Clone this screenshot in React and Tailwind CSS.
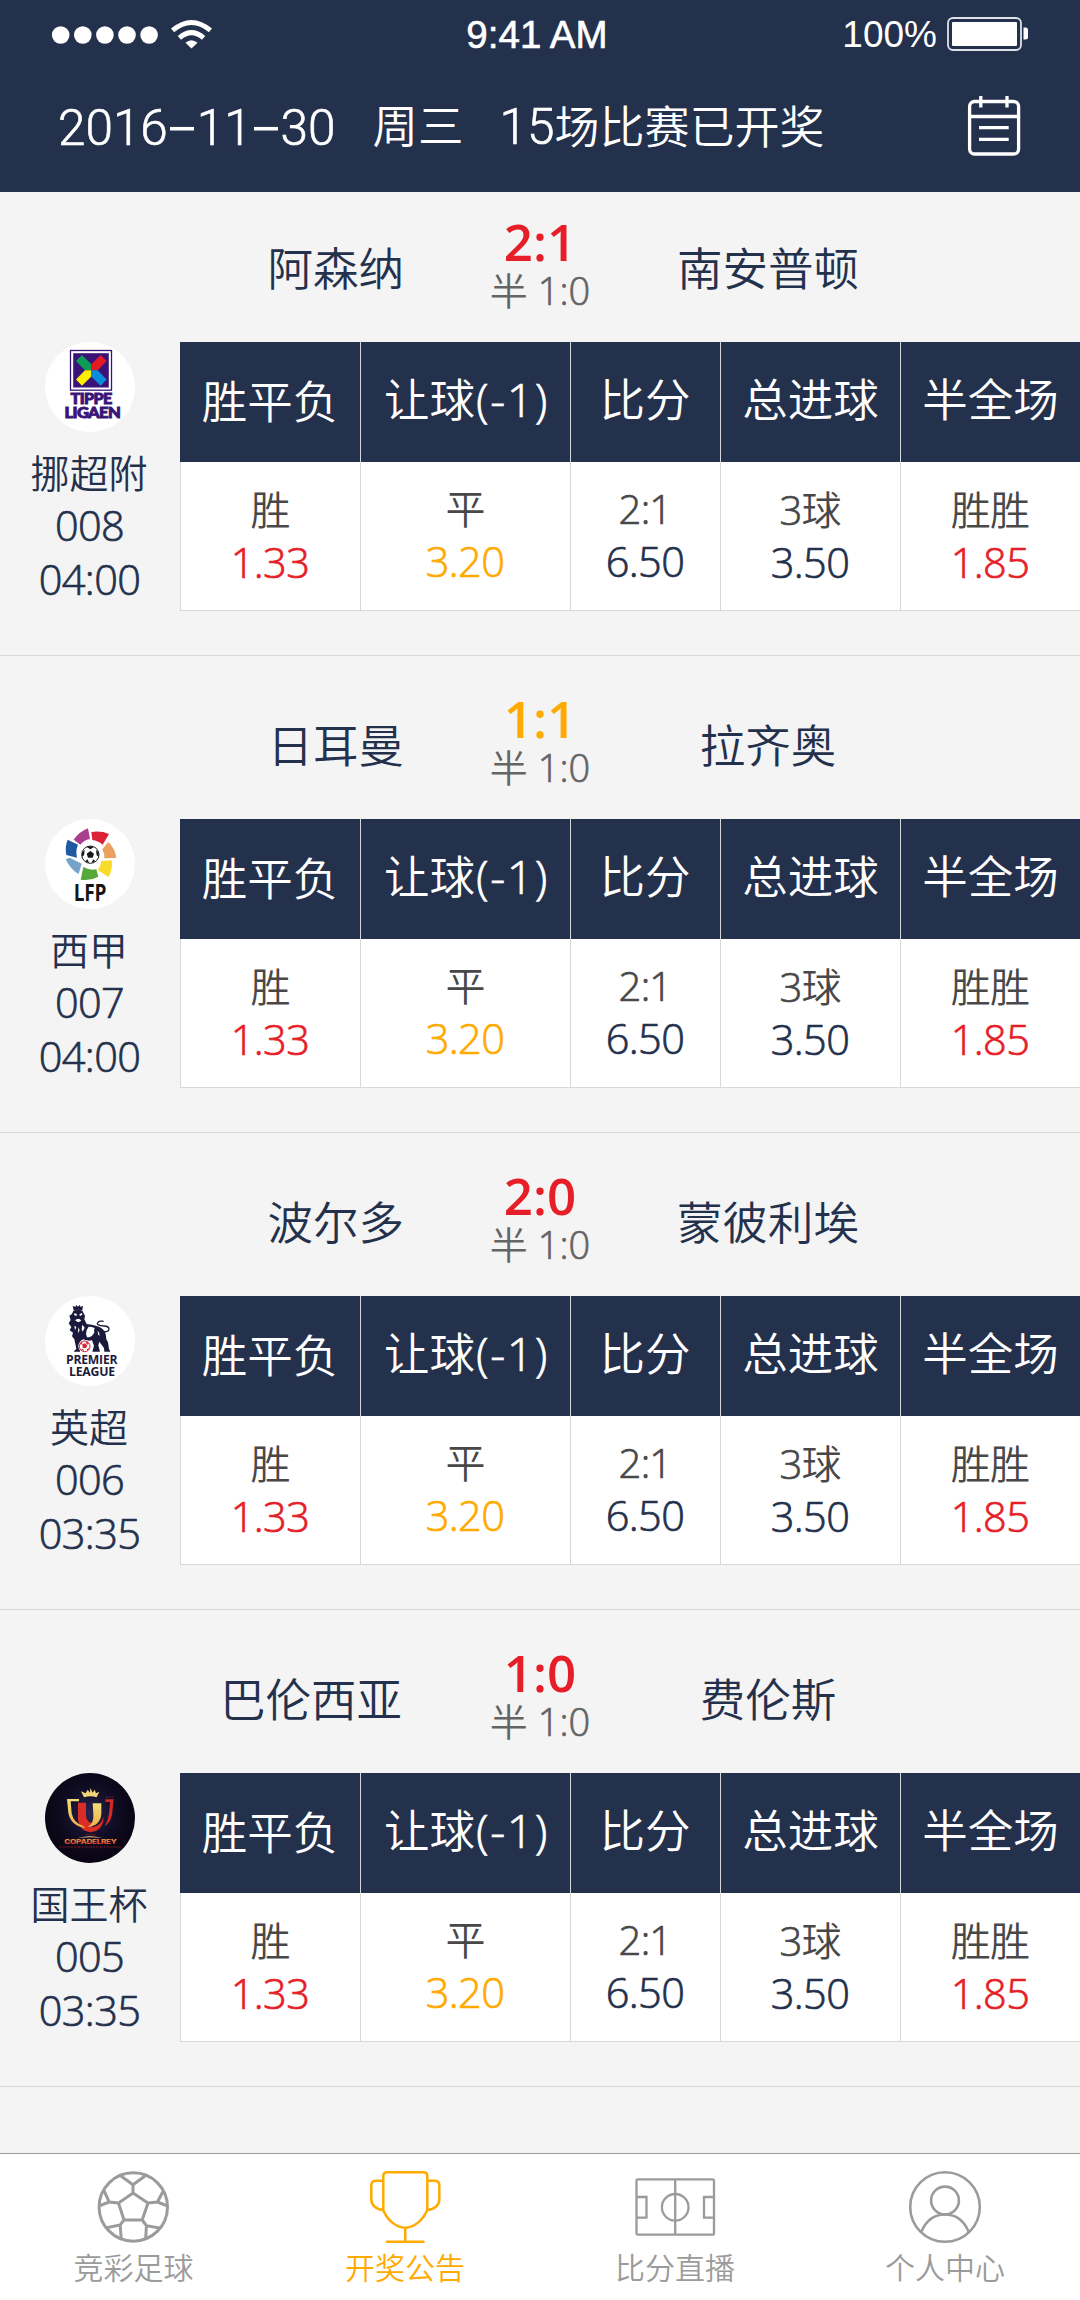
const RED = "text-[#e61e28]";
const ORANGE = "text-[#ffaa00]";
const NAVY = "text-[#24314d]";

function SignalIcon() {
  return (
    <svg width="162" height="32" viewBox="0 0 162 32" fill="#fff">
      {[9.7, 31.8, 53.9, 76, 98.1].map((x) => (
        <circle key={x} cx={x} cy="17" r="8.8" />
      ))}
      <g fill="none" stroke="#fff" strokeWidth="5">
        <path d="M121.6 12.4Q140.5-3.4 159.4 12.4" />
        <path d="M128.4 19.8Q140.5 9.400 152.600 19.8" />
      </g>
      <path d="M134.400 24.800Q140.500 19.800 146.600 24.800L140.500 30.500z" />
    </svg>
  );
}

function BatteryIcon() {
  return (
    <svg width="82" height="34" viewBox="0 0 82 34">
      <rect x="1" y="1" width="73" height="32" rx="5" fill="none" stroke="#dfe2e8" strokeWidth="1.8" />
      <rect x="5" y="5" width="65" height="24" rx="1" fill="#fff" />
      <path d="M76.500 10.500h2q2.500 0 2.500 2.500v7q0 2.500-2.500 2.500h-2z" fill="#fff" />
    </svg>
  );
}

function CalendarIcon() {
  return (
    <svg width="57" height="64" viewBox="0 0 57 64" fill="none" stroke="#fff" strokeWidth="3.300">
      <rect x="3.600" y="7.500" width="49" height="52.500" rx="5" />
      <path d="M14.800 2v11.500M41 2v11.500M3.600 22.500h49M13 33.700h29.700M13 45.300h29.700" />
    </svg>
  );
}

function BallIcon() {
  return (
    <svg width="73" height="74" viewBox="0 0 73 74" fill="none" stroke="currentColor" strokeWidth="3">
      <circle cx="36.300" cy="37" r="34.200" />
      <path d="M36 23 51 33 45.200 50H27L21.500 33zM36 23V14.700L23.600 5.700M36 14.700 48.300 5.700M51 33 60.400 32 65.900 21.700M60.400 32 70.700 36M21.500 33 12.200 32 7 20.700M12.200 32 1.900 36M45.200 50 49.400 55.700 62.500 58M49.400 55.700 48.700 68.500M27 50 23.200 55 9.400 57.700M23.200 55 24.200 69" />
    </svg>
  );
}

function TrophyIcon() {
  return (
    <svg width="72" height="74" viewBox="0 0 72 74" fill="none" stroke="currentColor" strokeWidth="2.500">
      <path d="M14.300 40V6q0-3.700 4-3.700h36q4 0 4 3.700v34C54 50 45 57.700 36.200 57.700S18 50 14.300 40z" />
      <path d="M14.300 10.700H7q-4.700 0-4.700 4.500V30c0 5 5.200 9.700 12 9.900M58.300 10.700h7.300q4.700 0 4.700 4.500V30c0 5-5.200 9.700-12 9.900M36.200 57.700v14" />
      <path d="M18 71.700h36.500" strokeLinecap="round" />
    </svg>
  );
}

function PitchIcon() {
  return (
    <svg width="81" height="60" viewBox="0 0 81 60" fill="none" stroke="currentColor" strokeWidth="2.300">
      <rect x="1.500" y="2.300" width="77.500" height="55.400" rx="1.500" />
      <circle cx="40.200" cy="30.300" r="13.300" />
      <path d="M40.200 2.300v55.400M1.500 20h10v20.700h-10M79 20H69v20.700h10" />
    </svg>
  );
}

function PersonIcon() {
  return (
    <svg width="74" height="74" viewBox="0 0 74 74" fill="none" stroke="currentColor" strokeWidth="2.600">
      <circle cx="37" cy="37" r="34.800" />
      <circle cx="37" cy="30.500" r="13.900" />
      <path d="M13.300 62C18 50.500 26.500 44.500 37 44.500S56 50.500 60.700 62" />
    </svg>
  );
}

function TippeligaenLogo() {
  return (
    <svg width="90" height="90" viewBox="0 0 90 90">
      <circle cx="45" cy="45" r="45" fill="#fff" />
      <rect x="25.500" y="8.500" width="41" height="39.700" fill="#fff" stroke="#3a1378" strokeWidth="1.300" />
      <rect x="28.200" y="11.200" width="35.600" height="34.300" fill="#3a1378" />
      <path d="M31 19 37 13 46.300 22.300V28.300H40z" fill="#0c9c56" />
      <path d="M61.600 19 55.700 13 46.300 22.300V28.300H52.700z" fill="#e51b24" />
      <path d="M31 37.500 37 43.700 46.300 34.500V28.300H40z" fill="#ffee00" />
      <path d="M61.600 37.500 55.700 43.700 46.300 34.500V28.300H52.700z" fill="#0a8edc" />
      <g fill="#3a1378" stroke="#3a1378" strokeWidth=".9" fontFamily="Lato, sans-serif" fontWeight="900" fontSize="15.300">
        <text x="25.600" y="62.200" textLength="41" lengthAdjust="spacingAndGlyphs">TIPPE</text>
        <text x="19.600" y="75.800" textLength="55.500" lengthAdjust="spacingAndGlyphs">LIGAEN</text>
      </g>
    </svg>
  );
}

function LfpLogo() {
  return (
    <svg width="90" height="90" viewBox="45 57 270 270">
      <circle cx="180" cy="192" r="135" fill="#fff" />
      <path d="M131 119Q148 95 174 85L180 117Q161 121 151 134z" fill="#a8408f" />
      <path d="M184 96Q214 92 237 102L218 134Q204 122 187 120z" fill="#dc2038" />
      <path d="M235 126Q256 146 259 174L223 175Q224 160 217 148z" fill="#eba15d" />
      <path d="M214 183 245 181Q249 207 236 231L203 211Q213 197 214 183z" fill="#f8dc2c" />
      <path d="M160 201Q180 212 199 208L205 230Q180 244 152 239z" fill="#56a838" />
      <path d="M107 178 119 173 155 191 146 222Q122 210 107 178z" fill="#77a3cb" />
      <path d="M113 119 144 134Q136 152 141 173L109 165Q104 140 113 119z" fill="#2059a2" />
      <circle cx="181" cy="164" r="26" fill="#fff" stroke="#222" strokeWidth="3" />
      <g fill="#161616">
        <path d="M181 153 192 161 188 173H174L170 161z" />
        <path d="M170 141Q181 136 192 141L181 148zM156 157 164 150 162 166 156 170zM206 157 198 150 200 166 206 170zM166 184 172 178 178 189zM196 184 190 178 184 189z" />
      </g>
      <text x="131" y="303" fill="#161616" fontFamily="'Open Sans', sans-serif" fontWeight="700" fontSize="70" textLength="98" lengthAdjust="spacingAndGlyphs">LFP</text>
    </svg>
  );
}

function PremierLeagueLogo() {
  return (
    <svg width="90" height="90" viewBox="45 48 270 270">
      <circle cx="180" cy="183" r="135" fill="#fff" />
      <g fill="#1c1a3c">
        <path d="M131 91 128 77 136 81 139 75 144 80 149 75 152 81 159 77 157 91Q144 87 131 91z" />
        <path d="M130 92Q144 87 157 92L165 107 163 118 170 132Q185 133 200 138 222 144 227 162L229 178 234 187 237 207 241 215H223L222 204 208 185 205 196 210 215H187L192 197 186 181Q172 184 160 178L152 182 150 215H131L139 206 133 178 126 169 129 158 119 151 124 141 116 130 122 120 118 107 126 102z" />
      </g>
      <path d="M221 155C242 157 242 139 222 138 207 137 198 134 204 127 209 121 215 124 221 124" fill="none" stroke="#1c1a3c" strokeWidth="4" />
      <path d="M134 99 141 103 139 108 132 105zM148 103 156 99 157 104 150 108zM141 117 149 117 154 122 145 127 135 121zM133 137 139 141 135 151zM157 134 164 143 158 155 155 148zM145 142 149 151 144 160zM176 140Q186 140 194 144 190 152 193 158 186 170 178 172L171 172Q166 162 170 150zM202 152Q210 158 208 168L204 163Q205 158 202 152z" fill="#fff" />
      <circle cx="164" cy="199" r="19" fill="#fff" />
      <circle cx="164" cy="199" r="16" fill="#fff" stroke="#d9213b" strokeWidth="3" />
      <path d="M157 193 166 190 172 197 167 205 158 203zM150 191 155 185 158 188 153 195zM168 184 176 189 174 195 168 189zM153 208 160 207 162 214zM170 208 178 204 174 212z" fill="#d9213b" />
      <g fill="#1c1a3c" fontFamily="'Open Sans', sans-serif" fontWeight="700" fontSize="39">
        <text x="108" y="252" textLength="154" lengthAdjust="spacingAndGlyphs">PREMIER</text>
        <text x="117" y="288" textLength="138" lengthAdjust="spacingAndGlyphs">LEAGUE</text>
      </g>
    </svg>
  );
}

function CopaDelReyLogo() {
  return (
    <svg width="90" height="90" viewBox="45 39 270 270">
      <defs>
        <radialGradient id="copaGlow" cx=".5" cy=".45" r=".5">
          <stop offset="0" stopColor="#2a2550" />
          <stop offset=".6" stopColor="#100c22" />
          <stop offset="1" stopColor="#0a0615" />
        </radialGradient>
        <linearGradient id="copaGold" x1="0" y1="0" x2="0" y2="1">
          <stop offset="0" stopColor="#f3dc7c" />
          <stop offset="1" stopColor="#f0b045" />
        </linearGradient>
        <linearGradient id="copaText" x1="0" y1="0" x2="0" y2="1">
          <stop offset="0" stopColor="#f6b04a" />
          <stop offset="1" stopColor="#e2322a" />
        </linearGradient>
      </defs>
      <circle cx="180" cy="174" r="135" fill="url(#copaGlow)" />
      <path d="M162 112 153 94 167 100 173 89 180 98 181 84 188 98 194 89 198 100 208 95 200 112Q181 106 162 112z" fill="#f4d775" />
      <path d="M144 128H168V166Q168 188 190 190L186 202Q215 196 220 170V184Q212 215 182 217 148 213 144 180z" fill="#d92d26" />
      <path d="M226 118H251L246 166Q241 188 224 199 235 180 237 160L240 126H226z" fill="#cf2a26" />
      <path d="M111 117H147V124H122L125 160Q131 190 160 198L166 204Q121 196 115 158z" fill="url(#copaGold)" />
      <path d="M188 130H214V162Q211 198 172 201 193 190 190 160z" fill="url(#copaGold)" />
      <path d="M143 234Q180 223 217 234 180 229 143 234z" fill="#f2c98d" />
      <text x="103" y="251" fill="url(#copaText)" fontFamily="Inter, sans-serif" fontWeight="800" fontSize="18" textLength="157" lengthAdjust="spacingAndGlyphs">COPADELREY</text>
      <path d="M88 261H273" stroke="#a32024" strokeWidth="3" strokeDasharray="5 2 3 2 7 3" opacity=".75" />
      <path d="M168 224H196M229 111H250" stroke="#a32024" strokeWidth="3" strokeDasharray="5 3" opacity=".8" />
    </svg>
  );
}

const MATCHES = [
  { home: "阿森纳", away: "南安普顿", score: "2:1", color: RED, Logo: TippeligaenLogo, league: "挪超附", no: "008", time: "04:00" },
  { home: "日耳曼", away: "拉齐奥", score: "1:1", color: ORANGE, Logo: LfpLogo, league: "西甲", no: "007", time: "04:00" },
  { home: "波尔多", away: "蒙彼利埃", score: "2:0", color: RED, Logo: PremierLeagueLogo, league: "英超", no: "006", time: "03:35" },
  { home: "巴伦西亚", away: "费伦斯", score: "1:0", color: RED, Logo: CopaDelReyLogo, league: "国王杯", no: "005", time: "03:35" },
];

const COLUMNS = [
  { title: "胜平负", unit: "胜", odds: "1.33", color: RED, nudge: "pb-[2px]", bodyNudge: "pt-[22px]" },
  { title: "让球", handicap: "(-1)", unit: "平", odds: "3.20", color: ORANGE, nudge: "pb-[6px]", bodyNudge: "pt-[21px]" },
  { title: "比分", count: "2:1", odds: "6.50", color: NAVY, nudge: "pb-[6px] pr-px", bodyNudge: "pt-[21px]" },
  { title: "总进球", count: "3", unit: "球", odds: "3.50", color: NAVY, nudge: "pb-[6px]", bodyNudge: "pt-[22px]" },
  { title: "半全场", unit: "胜胜", odds: "1.85", color: RED, nudge: "pb-[6px]", bodyNudge: "pt-[22px]" },
];

const TABS = [
  { label: "竞彩足球", Icon: BallIcon, color: "text-[#9b9b9b] pr-[3px]" },
  { label: "开奖公告", Icon: TrophyIcon, color: ORANGE },
  { label: "比分直播", Icon: PitchIcon, color: "text-[#9b9b9b]" },
  { label: "个人中心", Icon: PersonIcon, color: "text-[#9b9b9b]" },
];

// Light digits thickened slightly so they sit evenly beside the Chinese text.
function Num({ children }) {
  return <span className="font-light [-webkit-text-stroke:0.7px_currentColor]">{children}</span>;
}

function OddsTable() {
  return (
    <div className="grid h-[269px] w-[900px] grid-cols-[180px_210px_150px_180px_180px] grid-rows-[120px_149px]">
      {COLUMNS.map((c, i) => (
        <div
          key={c.title}
          className={`flex items-center justify-center bg-[#24314d] text-[45.5px] leading-[60px] text-white ${i ? "border-l border-[#d6d8dc]" : ""} ${c.nudge}`}
        >
          {c.title}
          {c.handicap && (
            <span className="-mr-[2px] pl-px text-[46.5px] tracking-[1.5px]">
              <Num>{c.handicap}</Num>
            </span>
          )}
        </div>
      ))}
      {COLUMNS.map((c) => (
        <div key={c.title} className={`flex flex-col items-center border-b border-l border-[#d8d8d8] bg-white pr-px ${c.bodyNudge}`}>
          <div className="h-[52px] text-[40px] leading-[52px] tracking-[-0.02em] text-[#484848]">
            {c.count && <Num>{c.count}</Num>}
            {c.unit}
          </div>
          <div className={`h-[52px] text-[41.5px] leading-[52px] tracking-[-0.015em] ${c.color}`}>
            <Num>{c.odds}</Num>
          </div>
        </div>
      ))}
    </div>
  );
}

function Match({ match, first }) {
  const { home, away, score, color, Logo, league, no, time } = match;
  return (
    <section className={`flex flex-col justify-end border-b border-[#d8d8d8] pb-[44px] ${first ? "h-[464px]" : "h-[477px]"}`}>
      <div className={`flex h-[150px] items-center text-[45.5px] ${NAVY}`}>
        <div className={`w-[404px] pt-[2px] text-right leading-[60px] ${home.length > 3 ? "pr-[2px]" : ""}`}>{home}</div>
        <div className="flex h-full w-[272px] flex-col items-center pt-6">
          <div className={`h-[50px] text-[51px] leading-[50px] font-semibold ${color}`}>{score}</div>
          <div className="h-[46px] pt-px text-[38px] leading-[46px] text-[#646464]">
            半 <Num>1:0</Num>
          </div>
        </div>
        <div className="w-[186px] pt-px pr-[2px] text-center leading-[60px] whitespace-nowrap">{away}</div>
      </div>
      <div className="flex">
        <div className={`flex w-[180px] flex-col items-center text-[41.5px] tracking-[-0.015em] ${NAVY}`}>
          <Logo />
          <div className="mt-[14px] h-[53px] pr-[2px] text-[39px] leading-[53px] tracking-normal">{league}</div>
          <div className="h-[53px] pr-px leading-[53px]">
            <Num>{no}</Num>
          </div>
          <div className="h-[54px] pr-px leading-[54px]">
            <Num>{time}</Num>
          </div>
        </div>
        <OddsTable />
      </div>
    </section>
  );
}

function Dash() {
  return <span className="font-['Liberation_Sans',sans-serif] [-webkit-text-stroke:0px]">−</span>;
}

export default function App() {
  return (
    <div className="flex h-[2300px] w-[1080px] flex-col overflow-hidden bg-[#f4f4f4] font-['Open_Sans','Noto_Sans_CJK_SC',sans-serif] font-[350]">
      <header className="h-[192px] bg-[#24314d] text-white">
        <div className="grid h-[68px] grid-cols-3 items-center px-[51px] font-['Liberation_Sans',sans-serif] text-[37px] font-normal">
          <SignalIcon />
          <div className="pt-[2px] pr-[6px] text-center text-[38.5px] leading-[40px] [-webkit-text-stroke:0.6px_white]">9:41 AM</div>
          <div className="flex items-center justify-end gap-[10px]">
            <span className="pt-[2px] leading-[40px]">100%</span>
            <BatteryIcon />
          </div>
        </div>
        <div className="flex h-[116px] items-center justify-between pr-[57px] pl-[58px]">
          <div className="flex items-center gap-[37px] pt-[3px] font-[Roboto,'Noto_Sans_CJK_SC',sans-serif] text-[45.5px] leading-[60px]">
            <span className="text-[49.5px] [-webkit-text-stroke:0.6px_white]">
              2016<Dash />11<Dash />30
            </span>
            <span>周三</span>
            <span className="-ml-px">
              <span className="text-[49.5px] [-webkit-text-stroke:0.6px_white]">15</span>
              <span className="text-[45px]">场比赛已开奖</span>
            </span>
          </div>
          <CalendarIcon />
        </div>
      </header>
      <main className="flex-1">
        {MATCHES.map((m, i) => (
          <Match key={m.no} match={m} first={i === 0} />
        ))}
      </main>
      <nav className="grid h-[147px] grid-cols-4 border-t border-[#9b9b9b] bg-white">
        {TABS.map(({ label, Icon, color }) => (
          <div key={label} className={`flex flex-col items-center pt-4 ${color}`}>
            <div className="flex h-[74px] items-center">
              <Icon />
            </div>
            <div className="text-[30px] leading-[48px]">{label}</div>
          </div>
        ))}
      </nav>
    </div>
  );
}
